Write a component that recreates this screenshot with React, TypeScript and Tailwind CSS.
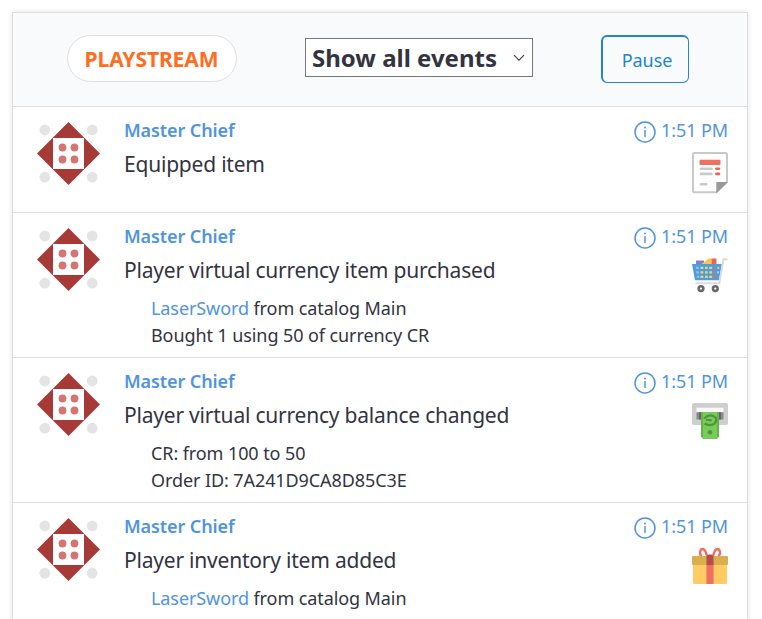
import React from "react";

function Avatar() {
  return (
    <svg width="64" height="64" viewBox="0 0 64 64" className="block shrink-0">
      <g fill="#e4e4e4">
        <circle cx="7.8" cy="8" r="5.4" />
        <circle cx="55.2" cy="8" r="5.4" />
        <circle cx="7.8" cy="55.2" r="5.4" />
        <circle cx="55.2" cy="55.2" r="5.4" />
      </g>
      <path d="M31.5 0 L63 31.5 L31.5 63 L0 31.5 Z" fill="#a63a37" />
      <rect x="16" y="16" width="31" height="31" fill="#fff" />
      <g fill="#d27674">
        <circle cx="25.5" cy="25.5" r="3.9" />
        <circle cx="37.5" cy="25.5" r="3.9" />
        <circle cx="25.5" cy="37.5" r="3.9" />
        <circle cx="37.5" cy="37.5" r="3.9" />
      </g>
    </svg>
  );
}

function NoteIcon() {
  return (
    <svg width="36" height="42" viewBox="0 0 36 42" className="block">
      <path d="M2.5 1H33.5Q35 1 35 2.5V30L24.5 40.2H2.5Q1 40.2 1 38.7V2.5Q1 1 2.5 1Z" fill="#fff" stroke="#c9c9c9" strokeWidth="2" />
      <path d="M24.3 30H36L24.3 41.2Z" fill="#999" />
      <rect x="7.5" y="7.7" width="21" height="5.3" rx="1" fill="#ef6f62" />
      <g stroke="#c9c9c9" strokeWidth="2.6" strokeLinecap="round">
        <path d="M8.9 16.7H19.5M8.9 21.9H19.5M8.9 32.2H14.3" />
        <path d="M24.3 16.7H27M24.3 21.9H27" stroke="#ef6456" />
      </g>
    </svg>
  );
}

function CartIcon() {
  return (
    <svg width="36" height="36" viewBox="0 0 36 36" className="block">
      <path d="M4 2.5H12V8H4Z" fill="#8f79c4" />
      <path d="M8 7L17 0.5H19.5V8H8Z" fill="#ffc34d" />
      <path d="M19.5 0.5H24.5V8H19.5Z" fill="#ef6355" />
      <path d="M0 6H30L27 22.3H3Z" fill="#4aa0df" />
      <g>
        <path d="M4 8.7h2.8v2.4H4zM4.2 13.2h2.8v2.4H4.2zM4.8 17.7h2.4v2.2H4.8z" fill="#a6b5e8" />
        <path d="M8.5 8.7h2.8v2.4H8.5zM8.5 13.2h2.8v2.4H8.5zM8.5 17.7h2.8v2.2H8.5zM13 8.7h2.8v2.4H13zM13 13.2h2.8v2.4H13zM13 17.7h2.8v2.2H13zM17.3 8.7h2.8v2.4h-2.8zM17.3 13.2h2.8v2.4h-2.8zM17.3 17.7h2.8v2.2h-2.8z" fill="#f4cf70" />
        <path d="M21.5 8.7h2.8v2.4h-2.8zM21.5 13.2h2.8v2.4h-2.8zM21.5 17.7h2.8v2.2h-2.8z" fill="#e66c6b" />
        <path d="M25.3 8.7h2v2.4h-2zM25 13.2h2v2.4h-2z" fill="#9ed0ee" />
      </g>
      <path d="M35.5 1.2H31.5L27.3 25.3H3.5" fill="none" stroke="#dcdcdc" strokeWidth="2" />
      <g fill="#fff" stroke="#686868" strokeWidth="2.5">
        <circle cx="9" cy="30.6" r="2.4" />
        <circle cx="23.3" cy="30.6" r="2.4" />
      </g>
    </svg>
  );
}

function CashIcon() {
  return (
    <svg width="36" height="37" viewBox="0 0 36 37" className="block">
      <rect width="36" height="22" rx="2" fill="#cecece" />
      <rect x="4.5" y="4.7" width="27" height="4.6" fill="#f8f8f8" />
      <rect x="4.5" y="9.2" width="27" height="7.3" fill="#8a8a8a" />
      <path d="M7 9.2H29V16.5H7Z" fill="#666" />
      <path d="M9 9H27V33.5L25 36H11L9 33.5Z" fill="#78ca59" />
      <path d="M9 9H11V34H9ZM25 9H27V34H25Z" fill="#66b34c" />
      <g fill="none" stroke="#4d963c" strokeWidth="2.2">
        <path d="M12 15.5Q18 10 23.5 14.5Q25.5 18 22 21Q17 23.5 12.5 20.5" />
        <path d="M14 17H18.5V18.5" />
      </g>
      <circle cx="18" cy="29.3" r="2.3" fill="#4d963c" />
    </svg>
  );
}

function GiftIcon() {
  return (
    <svg width="36" height="38" viewBox="0 0 36 38" className="block">
      <g fill="none" stroke="#ee6e62" strokeWidth="2.4">
        <path d="M15.2 9C14 7 13.5 2 10.8 2C8 2.2 6.5 6.8 9.8 9" />
        <path d="M20.8 9C22 7 22.5 2 25.2 2C28 2.2 29.5 6.8 26.2 9" />
      </g>
      <path d="M1 17H35V35.5Q35 37 33.5 37H2.5Q1 37 1 35.5Z" fill="#ffcb62" />
      <rect y="9" width="36" height="9" rx="1" fill="#d9ae51" />
      <rect x="14.5" y="17" width="7" height="20" fill="#ee6e62" />
      <path d="M14.5 18V9Q18 5.5 21.5 9V18Z" fill="#b64d46" />
    </svg>
  );
}

function InfoIcon() {
  return (
    <svg width="22" height="22" viewBox="0 0 22 22" className="mt-[2px] block shrink-0">
      <circle cx="11" cy="11" r="10" fill="none" stroke="#5094e0" strokeWidth="1.5" />
      <path d="M11 9V16" stroke="#5094e0" strokeWidth="1.5" />
      <circle cx="11" cy="6.6" r="1" fill="#5094e0" />
    </svg>
  );
}

type EventItem = {
  title: string;
  icon: React.ReactNode;
  iconGap: string;
  height: string;
  details?: React.ReactNode[];
};

const laserSword = (
  <>
    <span className="text-[#5094e0]">LaserSword</span> from catalog Main
  </>
);

const events: EventItem[] = [
  { title: "Equipped item", icon: <NoteIcon />, iconGap: "mt-2", height: "h-[106px]" },
  {
    title: "Player virtual currency item purchased",
    icon: <CartIcon />,
    iconGap: "mt-2",
    height: "h-[145px]",
    details: [laserSword, "Bought 1 using 50 of currency CR"],
  },
  {
    title: "Player virtual currency balance changed",
    icon: <CashIcon />,
    iconGap: "mt-2",
    height: "h-[145px]",
    details: ["CR: from 100 to 50", "Order ID: 7A241D9CA8D85C3E"],
  },
  {
    title: "Player inventory item added",
    icon: <GiftIcon />,
    iconGap: "mt-[7px]",
    height: "h-[145px]",
    details: [laserSword],
  },
];

function EventRow({ event }: { event: EventItem }) {
  return (
    <li className={`flex shrink-0 border-b border-[#dedede] pl-6 pr-[19px] ${event.height}`}>
      <div className="mt-[15px]">
        <Avatar />
      </div>
      <div className="ml-[23px] mt-[10px] min-w-0 flex-1">
        <div className="text-[18px] leading-[27px] font-semibold tracking-[-0.1px] text-[#5094e0]">Master Chief</div>
        <div className="mt-[5px] text-[21px] leading-[30px] tracking-[-0.21px]">{event.title}</div>
        {event.details && (
          <div className="ml-[27px] mt-[10px] text-[18px] leading-[27px] tracking-[-0.09px]">
            {event.details.map((detail, i) => (
              <div key={i}>{detail}</div>
            ))}
          </div>
        )}
      </div>
      <div className="mt-[10px] flex shrink-0 flex-col items-end">
        <div className="flex items-center gap-[5px] text-[18px] leading-[27px] tracking-[-0.1px] text-[#5094e0]">
          <InfoIcon />
          <span>1:51 PM</span>
        </div>
        <div className={event.iconGap}>{event.icon}</div>
      </div>
    </li>
  );
}

export default function App() {
  return (
    <div className="h-[619px] overflow-hidden bg-white pl-3 pt-3 font-['Noto_Sans','Open_Sans',sans-serif] text-[#32343f]">
      <section className="h-[640px] w-[736px] border border-[#dedede] bg-white shadow-[0_0_5px_rgba(0,0,0,0.12)]">
        <header className="flex h-[94px] items-start border-b border-[#dedede] bg-[#f9fafc] pl-[54px]">
          <div className="mt-[22px] flex h-[47px] w-[170px] items-center justify-center rounded-full border border-[#dedede] bg-white pr-px pt-[2px] text-[21px] font-bold tracking-[-0.1px] text-[#ff6d1f]">
            PLAYSTREAM
          </div>
          <button className="ml-[68px] mt-[25px] flex h-[39px] w-[228px] items-center justify-between border border-[#767676] bg-white px-[6px] text-[24px] font-bold">
            <span>Show all events</span>
            <svg width="13" height="8" viewBox="0 0 13 8" fill="none" stroke="#444" strokeWidth="1.2">
              <path d="M1 1.2L6 6.2L11 1.2" />
            </svg>
          </button>
          <button className="ml-[68px] mt-[22px] flex h-12 w-[88px] items-center justify-center rounded-md border border-l-2 border-t-2 border-[#2185d0] pl-[3px] pt-[1px] text-[18px] tracking-[-0.05px] text-[#2185d0]">
            Pause
          </button>
        </header>
        <ul>
          {events.map((event) => (
            <EventRow key={event.title} event={event} />
          ))}
        </ul>
      </section>
    </div>
  );
}
